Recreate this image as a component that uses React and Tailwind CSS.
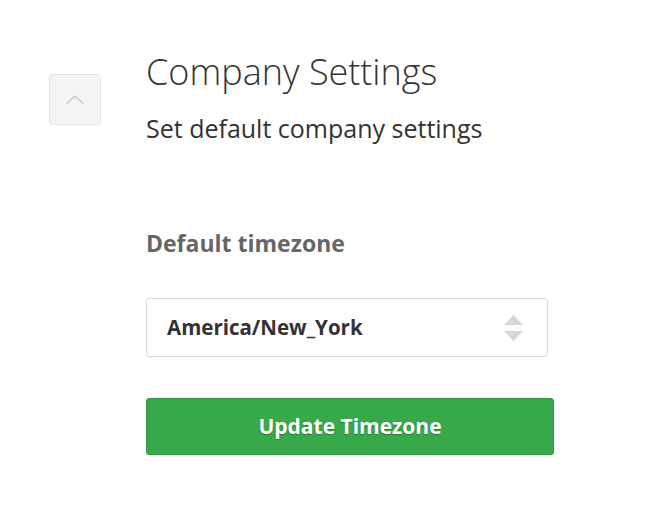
export default function App() {
  return (
    <div className="min-h-[510px] bg-white font-['Open_Sans',sans-serif] text-[#333]">
      <div className="flex pl-[49px] pt-[49px]">
        <div className="pt-[25px]">
          <button className="flex h-[51px] w-[52px] items-center justify-center rounded-[4px] border border-[#e3e3e3] bg-[#f4f4f4]">
            <svg width="20" height="11" viewBox="0 0 20 11" fill="none">
              <path d="M2 9.5 10 2l8 7.5" stroke="#cbcbcb" strokeWidth="1.6" strokeLinecap="round" strokeLinejoin="round" />
            </svg>
          </button>
        </div>
        <div className="ml-[45px] w-[408px]">
          <h1 className="text-[36px] font-light leading-[46px] text-[#333]">Company Settings</h1>
          <p className="mt-[17px] text-[25px] leading-[32px] text-[#333]">Set default company settings</p>
          <h2 className="mt-[84px] text-[23px] font-bold leading-[30px] text-[#666]">Default timezone</h2>
          <div className="mt-[40px] flex h-[59px] w-[402px] items-center justify-between rounded-[3px] border border-[#dadada] bg-white pl-[20px] pr-[24px]">
            <span className="text-[20.5px] font-bold text-[#333]">America/New_York</span>
            <svg width="19" height="26" viewBox="0 0 19 26">
              <path d="M9.5 0 19 10H0z" fill="#d6d6d6" />
              <path d="M9.5 26 19 16H0z" fill="#d6d6d6" />
            </svg>
          </div>
          <button className="mt-[41px] flex h-[57px] w-[408px] items-center justify-center rounded-[3px] border border-[#2f9a41] bg-[#37a94a] text-[21px] font-bold text-white [text-shadow:0_1px_1px_rgba(0,0,0,0.3)]">
            Update Timezone
          </button>
        </div>
      </div>
    </div>
  );
}
